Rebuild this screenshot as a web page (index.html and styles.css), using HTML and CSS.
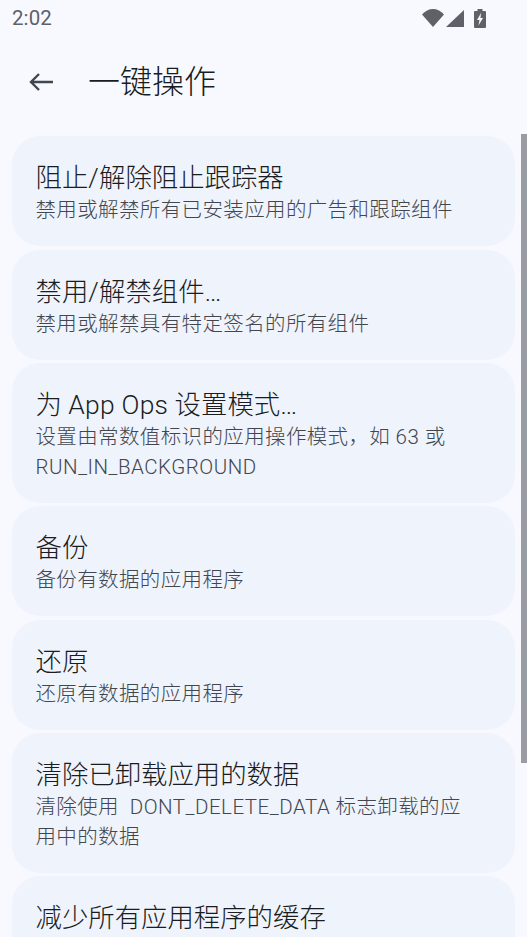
FILE: index.html
```html
<!DOCTYPE html>
<html lang="zh-CN">
<head>
<meta charset="utf-8">
<title>一键操作</title>
<link rel="stylesheet" href="styles.css">
</head>
<body>
<div class="screen">
  <header class="status">
    <span class="time">2:02</span>
    <span class="status-icons">
      <svg class="wifi" width="22" height="18" viewBox="0 0 22 18"><path class="ic" d="M0 5.500C3 2 7 0 11 0s8 2 11 5.500L11 18z"/></svg>
      <svg class="cell" width="18" height="17" viewBox="0 0 18 17"><path class="ic" d="M18 0V17H0z"/></svg>
      <svg class="batt" width="12" height="19" viewBox="0 0 12 19"><path class="ic" fill-rule="evenodd" d="M3.500 0h5v2H11a1 1 0 0 1 1 1v15a1 1 0 0 1-1 1H1a1 1 0 0 1-1-1V3a1 1 0 0 1 1-1h2.500zM7 4L3 11h2.500L4.500 16.500 9 9H6.500z"/></svg>
    </span>
  </header>
  <div class="appbar">
    <svg class="back" width="26" height="20" viewBox="0 0 26 20"><path d="M25 10H3M11 2l-8 8 8 8" fill="none" stroke="#42464e" stroke-width="2.400"/></svg>
    <h1 class="title">一键操作</h1>
  </div>
  <main class="list">
    <section class="card"><h2>阻止<span class="lat">/</span>解除阻止跟踪器</h2><p>禁用或解禁所有已安装应用的广告和跟踪组件</p></section>
    <section class="card"><h2>禁用<span class="lat">/</span>解禁组件<span class="lat">…</span></h2><p>禁用或解禁具有特定签名的所有组件</p></section>
    <section class="card"><h2>为 <span class="lat">App Ops</span> 设置模式<span class="lat">…</span></h2><p>设置由常数值标识的应用操作模式，如 <span class="lat">63</span> 或 <span class="lat">RUN_IN_BACKGROUND</span></p></section>
    <section class="card"><h2>备份</h2><p>备份有数据的应用程序</p></section>
    <section class="card"><h2>还原</h2><p>还原有数据的应用程序</p></section>
    <section class="card"><h2>清除已卸载应用的数据</h2><p>清除使用 &nbsp;<span class="lat">DONT_DELETE_DATA</span> 标志卸载的应<span>用中的数据</span></p></section>
    <section class="card"><h2>减少所有应用程序的缓存</h2><p>减少缓存</p></section>
  </main>
  <div class="scrollbar"></div>
</div>
</body>
</html>
```
FILE: styles.css
```css
* { box-sizing: border-box; }
html, body { margin: 0; padding: 0; }
body { background: #f8f9ff; font-family: Roboto, "Noto Sans CJK SC", sans-serif; }
.screen { position: relative; width: 527px; height: 937px; overflow: hidden; background: #f8f9ff; }
.status { height: 36px; padding: 0 41px 0 12px; display: flex; align-items: center; justify-content: space-between; }
.time { font-size: 20.500px; letter-spacing: 0.100px; color: #5e6168; }
.status-icons { display: flex; align-items: center; gap: 2px; }
.batt { margin-left: 8px; }
.ic { fill: #5e6168; }
.appbar { height: 92px; padding-left: 28px; display: flex; align-items: center; gap: 34px; }
.back { flex: none; }
.title { margin: 0; font-size: 32px; font-weight: 300; color: #191c20; line-height: 40px; }
.list { padding: 8px 12px 0; display: flex; flex-direction: column; gap: 3.660px; }
.card { background: #eff3fc; border-radius: 28px; padding: 24px 40px 20.700px 24px; }
.card h2 { margin: 0 0 0 -0.500px; font-size: 26.400px; font-weight: 300; line-height: 36px; color: #191c20; }
.card p { margin: 0 0 0 -0.500px; font-size: 20.500px; letter-spacing: 0.366px; font-weight: 300; line-height: 29.280px; color: #42464e; }
.lat { font-weight: 340; }
.card h2 .lat { letter-spacing: 0.250px; }
.card p .lat { letter-spacing: 0.520px; }
.scrollbar { position: absolute; right: 0; top: 134px; width: 6px; height: 629px; background: #9a9ca4; }
```
